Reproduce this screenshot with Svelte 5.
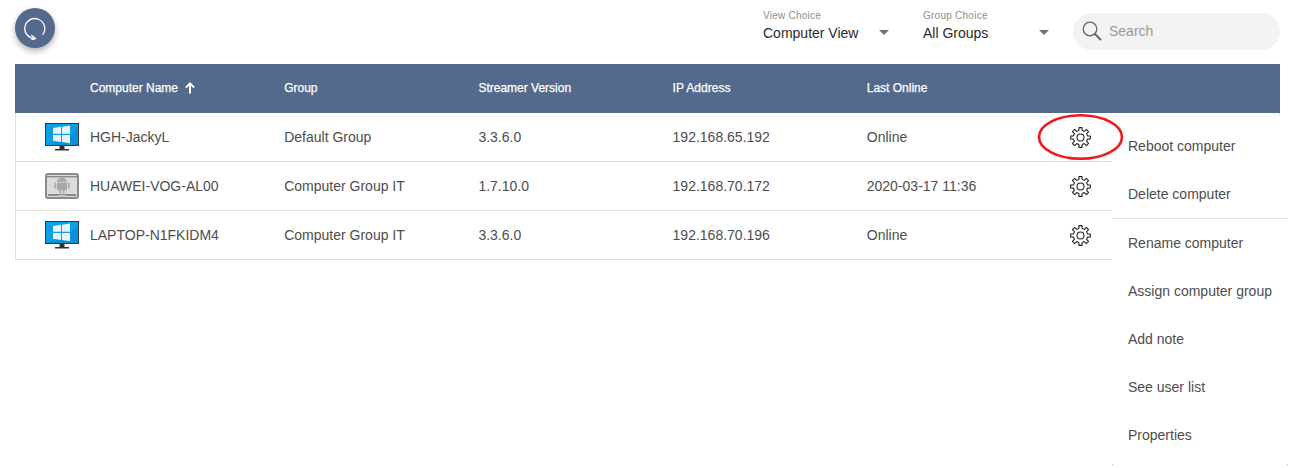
<script lang="ts">
	const columns = ['Group', 'Streamer Version', 'IP Address', 'Last Online'];

	const computers = [
		{ name: 'HGH-JackyL', group: 'Default Group', version: '3.3.6.0', ip: '192.168.65.192', seen: 'Online', os: 'windows' },
		{ name: 'HUAWEI-VOG-AL00', group: 'Computer Group IT', version: '1.7.10.0', ip: '192.168.70.172', seen: '2020-03-17 11:36', os: 'android' },
		{ name: 'LAPTOP-N1FKIDM4', group: 'Computer Group IT', version: '3.3.6.0', ip: '192.168.70.196', seen: 'Online', os: 'windows' }
	];

	const menu = [
		{ label: 'Reboot computer', divider: false },
		{ label: 'Delete computer', divider: true },
		{ label: 'Rename computer', divider: false },
		{ label: 'Assign computer group', divider: false },
		{ label: 'Add note', divider: false },
		{ label: 'See user list', divider: false },
		{ label: 'Properties', divider: false }
	];

	// 8 tooth cog outline, teeth built around the centre of a 24 box
	function cogPath() {
		const at = (r: number, deg: number) => {
			const a = ((deg - 90) * Math.PI) / 180;
			return `${(12 + r * Math.cos(a)).toFixed(2)} ${(12 + r * Math.sin(a)).toFixed(2)}`;
		};
		let d = '';
		for (let i = 0; i < 8; i++) {
			const a = i * 45;
			d += `${i === 0 ? 'M' : 'A8.2 8.2 0 0 1 '}${at(8.2, a - 13)}`;
			d += `L${at(11.4, a - 9)}L${at(11.4, a + 9)}L${at(8.2, a + 13)}`;
		}
		return d + 'A8.2 8.2 0 0 1 ' + at(8.2, -13) + 'Z';
	}

	const cog = cogPath();
</script>

<div class="page">
	<header class="toolbar">
		<button type="button" class="refresh" aria-label="Refresh">
			<svg width="24" height="24" viewBox="0 0 24 24" fill="none" stroke="#fff" stroke-width="1.3" stroke-linecap="round" stroke-linejoin="round">
				<path d="M20 18.2A10 10 0 1 0 12.5 22.5" />
				<path d="M8.6 19.4l3.9 3-3.7 1.5" />
			</svg>
		</button>

		<div class="choices">
			<div class="choice view">
				<span class="choice-label">View Choice</span>
				<span class="choice-value">Computer View</span>
				<span class="caret"></span>
			</div>
			<div class="choice group">
				<span class="choice-label">Group Choice</span>
				<span class="choice-value">All Groups</span>
				<span class="caret"></span>
			</div>
			<div class="search">
				<svg width="20" height="20" viewBox="0 0 20 20" fill="none" stroke="#666" stroke-linecap="round">
					<circle cx="8" cy="8" r="6.8" stroke-width="1.3" />
					<path d="M13 13l5.5 5.5" stroke-width="2" />
				</svg>
				<span>Search</span>
			</div>
		</div>
	</header>

	<section class="table">
		<div class="row head">
			<div class="cell icon-cell"></div>
			<div class="cell name-head">Computer Name
				<svg width="12" height="12" viewBox="0 0 12 12" fill="none" stroke="#fff" stroke-width="2"><path d="M6 11.5V1.5M1.8 5.6L6 1.4l4.2 4.2" /></svg>
			</div>
			{#each columns as col}
				<div class="cell">{col}</div>
			{/each}
		</div>

		{#each computers as pc}
			<div class="row">
				<div class="cell icon-cell">
					{#if pc.os === 'windows'}
						<svg width="34" height="28" viewBox="0 0 34 28">
							<rect x="0.5" y="0.5" width="33" height="22" fill="#0a9fe6" stroke="#2b3a44" />
							<path d="M1 22C13 21 26 14 33 4v18z" fill="#0b90d6" />
							<path d="M8 5l8-1.2v7h-8zM17 3.7l8-1.2v8.3h-8zM8 12h8v7l-8-1.2zM17 12h8v8.3l-8-1.2z" fill="#e6f5fd" />
							<rect x="14.5" y="23" width="5" height="3" fill="#333" />
							<rect x="10" y="26" width="14" height="1.5" fill="#333" />
						</svg>
					{:else}
						<svg width="34" height="26" viewBox="0 0 34 26">
							<rect x="1" y="1" width="32" height="24" rx="2" fill="#dcdcdc" stroke="#8a8a8a" stroke-width="2" />
							<rect x="0" y="3" width="34" height="1.4" fill="#8a8a8a" />
							<rect x="3" y="21" width="28" height="2" fill="#8a8a8a" />
							<rect x="13" y="22" width="8" height="2" fill="#c8c8c8" />
							<path d="M12 8.8a5 4.4 0 0 1 10 0zM12 9.6h10v7.6h-2.4v3.2h-1.8v-3.2h-1.6v3.2h-1.8v-3.2H12z" fill="#a8a8a8" />
							<rect x="9.4" y="9.6" width="1.8" height="6" rx=".9" fill="#a8a8a8" />
							<rect x="22.8" y="9.6" width="1.8" height="6" rx=".9" fill="#a8a8a8" />
						</svg>
					{/if}
				</div>
				<div class="cell">{pc.name}</div>
				<div class="cell">{pc.group}</div>
				<div class="cell">{pc.version}</div>
				<div class="cell">{pc.ip}</div>
				<div class="cell">{pc.seen}</div>
				<div class="cell gear-cell">
					<svg width="21" height="21" viewBox="0 0 24 24" fill="none" stroke="#222" stroke-width="1.25" stroke-linejoin="round">
						<path d={cog} />
						<circle cx="12" cy="12" r="4" />
					</svg>
				</div>
			</div>
		{/each}
	</section>

	<ul class="menu">
		{#each menu as item}
			<li class:divider={item.divider}>{item.label}</li>
		{/each}
	</ul>

	<svg class="highlight" width="88" height="48" viewBox="0 0 88 48" fill="none">
		<ellipse cx="43.5" cy="24" rx="41.5" ry="21.8" stroke="#f01818" stroke-width="2.6" />
	</svg>
</div>

<style>
	:global(body) {
		margin: 0;
		background: #fff;
	}

	.page {
		position: relative;
		width: 1301px;
		height: 468px;
		overflow: hidden;
		font-family: 'Liberation Sans', Arial, sans-serif;
		font-size: 14px;
		color: #4d4d4d;
	}

	.toolbar {
		display: flex;
		align-items: flex-start;
		justify-content: space-between;
		height: 64px;
		padding: 8px 21px 0 15px;
		box-sizing: border-box;
	}

	.refresh {
		display: flex;
		align-items: center;
		justify-content: center;
		width: 40px;
		height: 40px;
		padding: 0;
		border: none;
		border-radius: 50%;
		background: #546a8c;
		box-shadow: 0 3px 6px rgba(0, 0, 0, 0.3);
	}

	.choices {
		display: flex;
		align-items: flex-start;
	}

	.choice {
		position: relative;
		display: flex;
		flex-direction: column;
		padding-top: 2px;
	}

	.choice.view {
		width: 160px;
	}

	.choice.group {
		width: 150px;
	}

	.choice-label {
		font-size: 10px;
		line-height: 12px;
		letter-spacing: 0.25px;
		color: #8c8c8c;
	}

	.choice-value {
		margin-top: 1px;
		font-size: 14px;
		line-height: 20px;
		color: #2a2a2a;
	}

	.caret {
		position: absolute;
		top: 22px;
		left: 116px;
		border-left: 5.5px solid transparent;
		border-right: 5.5px solid transparent;
		border-top: 5px solid #757575;
	}

	.search {
		display: flex;
		align-items: center;
		gap: 7px;
		width: 207px;
		height: 37px;
		margin-top: 5px;
		padding: 0 0 1px 9px;
		box-sizing: border-box;
		border-radius: 19px;
		background: #f3f3f3;
		color: #999;
	}

	.table {
		width: 1265px;
		margin-left: 15px;
	}

	.row {
		display: grid;
		grid-template-columns: 74px repeat(5, 194.2px) 1fr;
		align-items: center;
		height: 49px;
		box-sizing: border-box;
		border-bottom: 1px solid #e0e0e0;
		border-left: 1px solid #e0e0e0;
		border-right: 1px solid #e0e0e0;
	}

	.row.head {
		grid-template-columns: 75px repeat(5, 194.2px) 1fr;
		padding-bottom: 1px;
		border: none;
		background: #546a8c;
		color: #fff;
		font-size: 12px;
		-webkit-text-stroke: 0.25px #fff;
	}

	.icon-cell {
		display: flex;
		justify-content: flex-start;
		padding-left: 29px;
	}

	.name-head {
		display: flex;
		align-items: center;
		gap: 6px;
	}

	.gear-cell {
		display: flex;
		padding-left: 9px;
	}

	.menu {
		position: absolute;
		left: 1112px;
		top: 116px;
		width: 176px;
		height: 349px;
		margin: 0;
		padding: 6px 0 0;
		box-sizing: border-box;
		list-style: none;
		background: #fff;
	}

	.menu::before,
	.menu::after {
		content: '';
		position: absolute;
		bottom: 0;
		width: 1px;
		height: 1px;
		background: #a9c8e8;
	}

	.menu::before {
		left: 0;
	}

	.menu::after {
		right: 0;
	}

	.menu li {
		height: 48px;
		padding-left: 16px;
		line-height: 48px;
	}

	.menu li.divider {
		border-bottom: 1px solid #e0e0e0;
	}

	.highlight {
		position: absolute;
		left: 1037px;
		top: 113px;
	}
</style>
